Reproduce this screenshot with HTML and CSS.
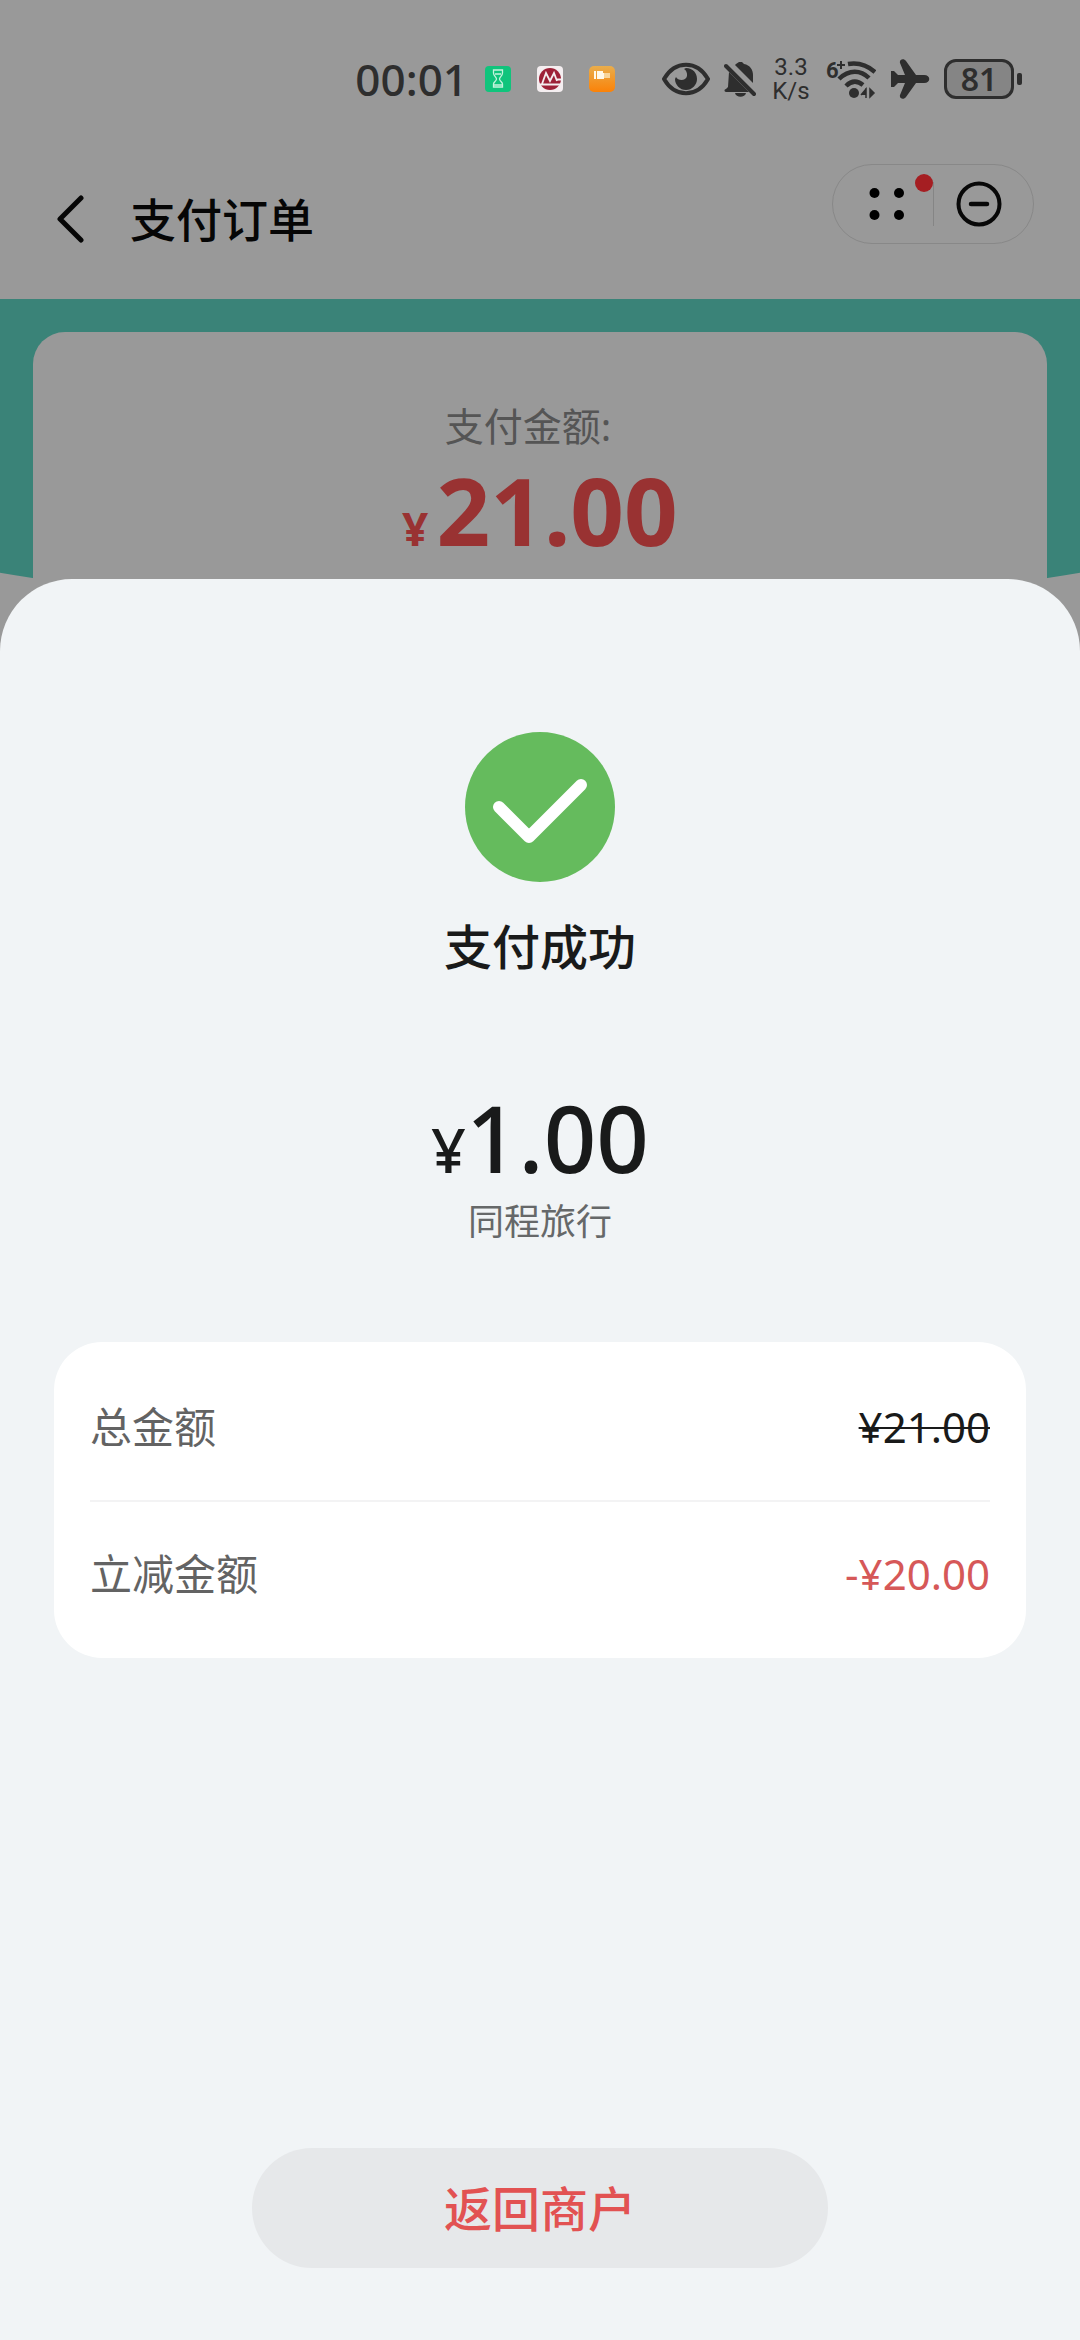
FILE: index.html
```html
<!DOCTYPE html>
<html lang="zh-CN">
<head>
<meta charset="utf-8">
<meta name="viewport" content="width=device-width">
<title>支付订单</title>
<link rel="stylesheet" href="styles.css">
</head>
<body>
<div class="screen">
  <main class="page">
    <div class="status">
      <time class="clock">00:01</time>
      <div class="notices">
        <svg width="28" height="28" viewBox="0 0 28 28"><rect x="1" y="1" width="26" height="26" rx="4" fill="#10c47c"/><path d="M9.500 5h9v3c0 3-3 4-3 6s3 3 3 5v3h-9v-3c0-2 3-3 3-5s-3-3-3-6zM11 9h6M10 20h8" fill="none" stroke="#c5f3dd" stroke-width="1.300"/></svg>
        <svg width="28" height="28" viewBox="0 0 28 28"><rect x="1" y="1" width="26" height="26" rx="4" fill="#f4eef0"/><circle cx="14" cy="14" r="11" fill="#9d2137"/><path d="M6 19l4-11 4 8 4-8 3 8M4 19.500h20M20 14.500h7" fill="none" stroke="#f4eef0" stroke-width="1.800"/></svg>
        <svg width="28" height="28" viewBox="0 0 28 28"><defs><linearGradient id="amber" x1="0" y1="0" x2="0" y2="1"><stop offset="0" stop-color="#e9ad4c"/><stop offset="1" stop-color="#fb8208"/></linearGradient></defs><rect x="1" y="1" width="26" height="26" rx="5" fill="url(#amber)"/><path d="M6 6h2v8H6zM9 6h6v2h1v6H9z" fill="#fff8e8"/><path d="M16 8h6v5h-6z" fill="#f8d59b"/></svg>
      </div>
      <div class="signals">
        <svg width="48" height="34" viewBox="0 0 48 34"><path d="M2 17C13-2 35-2 46 17 35 36 13 36 2 17z" fill="none" stroke="#2e2e2e" stroke-width="4" stroke-linejoin="round"/><path d="M24 6c7 0 11 5 11 11s-5 11-11 11-11-5-11-11l1-2c2 4 10 4 11-1 .5-3-1-6-3-7z" fill="#2e2e2e"/></svg>
        <svg width="32" height="36" viewBox="0 0 32 36"><path d="M2 5l28 28" stroke="#2e2e2e" stroke-width="4" stroke-linecap="round"/><path d="M5 11l20 20H2c-2 0-2-3 0-3l2-2zM12 3l3-2h3l2 2c6 1 9 6 9 11v8L11 4zM11 32h11c-1 5-10 5-11 0z" fill="#2e2e2e"/></svg>
        <div class="speed"><span>3.3</span><span>K/s</span></div>
        <svg width="50" height="42" viewBox="0 0 50 42"><text class="wifi-gen" x="0" y="20">6</text><path d="M11 7h8M15 3v8" stroke="#2e2e2e" stroke-width="2"/><path d="M22 6c11-2 19 1 27 8M13 21c10-10 22-9 30-1M20 28c6-6 12-5 17-1" fill="none" stroke="#2e2e2e" stroke-width="4.500"/><circle cx="28" cy="35" r="5" fill="#2e2e2e"/><path d="M40 30v10M35 37l5-6v6M44 31v8l4-4z" fill="#2e2e2e" stroke="#2e2e2e" stroke-width="1.500"/></svg>
        <svg width="40" height="40" viewBox="0 0 40 40"><path d="M1 12h3l4 4h7L10 4c-1-4 4-5 6-2l10 14h8c7 0 7 8 0 8h-8L16 38c-2 3-7 2-6-2l5-12H8l-4 4H1z" fill="#2e2e2e"/></svg>
        <div class="battery"><span class="battery-body">81</span><span class="battery-tip"></span></div>
      </div>
    </div>
    <header class="bar">
      <button class="back" aria-label="返回"><svg width="28" height="50" viewBox="0 0 28 50"><path d="M25 4L4 25l21 21" fill="none" stroke="#060606" stroke-width="5" stroke-linecap="round" stroke-linejoin="round"/></svg></button>
      <h1 class="title">支付订单</h1>
      <div class="capsule">
        <button class="capsule-part more" aria-label="更多"><svg width="36" height="34" viewBox="0 0 36 34"><circle cx="5.500" cy="6" r="5"/><circle cx="30" cy="6" r="5"/><circle cx="5.500" cy="28" r="5"/><circle cx="30" cy="28" r="5"/></svg><span class="dot"></span></button>
        <button class="capsule-part close" aria-label="关闭"><svg width="46" height="46" viewBox="0 0 46 46"><circle cx="23" cy="23" r="20.500" fill="none" stroke="#080808" stroke-width="4"/><path d="M15 23h16" stroke="#080808" stroke-width="4.500" stroke-linecap="round"/></svg></button>
      </div>
    </header>
    <section class="hero">
      <div class="order">
        <p class="order-label">支付金额:</p>
        <p class="order-sum"><span class="order-yen">¥</span>21.00</p>
      </div>
    </section>
  </main>

  <section class="sheet" role="dialog" aria-labelledby="result">
    <svg width="150" height="150" viewBox="0 0 150 150"><circle cx="75" cy="75" r="75" fill="#65bb5d"/><path d="M34 75l30 30 52-52" fill="none" stroke="#fff" stroke-width="12" stroke-linecap="round" stroke-linejoin="round"/></svg>
    <h2 class="result" id="result">支付成功</h2>
    <p class="paid"><span class="paid-yen">¥</span>1.00</p>
    <p class="merchant">同程旅行</p>
    <dl class="detail">
      <div class="row"><dt>总金额</dt><dd class="was">¥21.00</dd></div>
      <div class="row"><dt>立减金额</dt><dd class="off">-¥20.00</dd></div>
    </dl>
    <button class="return">返回商户</button>
  </section>
</div>
</body>
</html>
```
FILE: styles.css
```css
* { box-sizing: border-box; }

body,
h1,
h2,
p,
dl,
dd {
  margin: 0;
}

body {
  font-family: "Noto Sans", "Noto Sans CJK SC", sans-serif;
  background: #999;
}

button {
  padding: 0;
  border: 0;
  background: none;
  font: inherit;
  display: flex;
  align-items: center;
  justify-content: center;
}

svg { display: block; flex: none; }

.screen {
  display: grid;
  min-height: 100vh;
}

.page,
.sheet {
  grid-area: 1 / 1;
}

/* status bar */
.status {
  display: flex;
  justify-content: flex-end;
  align-items: center;
  height: 158px;
  padding-right: 58px;
  color: #2e2e2e;
}

.clock {
  font-size: 44px;
  font-weight: 500;
  line-height: 60px;
}

.notices {
  display: flex;
  gap: 24px;
  margin: 0 46px 0 16px;
}

.signals {
  display: flex;
  align-items: center;
  gap: 14px;
}

.speed {
  display: flex;
  flex-direction: column;
  align-items: center;
  width: 42px;
  font-family: Roboto, sans-serif;
  font-size: 24px;
  line-height: 24px;
}

.wifi-gen {
  font: 700 22px "Liberation Sans Narrow", Roboto, sans-serif;
  fill: #2e2e2e;
}

.battery {
  display: flex;
  align-items: center;
  gap: 3px;
}

.battery-body {
  width: 70px;
  height: 40px;
  border: 3px solid #2e2e2e;
  border-radius: 12px;
  background: #858585;
  font-size: 32px;
  font-weight: 600;
  line-height: 34px;
  text-align: center;
}

.battery-tip {
  width: 5px;
  height: 12px;
  border-radius: 2px;
  background: #2e2e2e;
}

/* title bar */
.bar {
  display: flex;
  align-items: center;
  height: 141px;
  padding: 0 46px 20px 56px;
}

.title {
  flex: 1;
  margin-left: 46px;
  font-size: 46px;
  font-weight: 500;
  line-height: 60px;
  color: #060606;
}

.capsule {
  display: flex;
  align-items: center;
  align-self: flex-start;
  width: 202px;
  height: 80px;
  margin-top: 6px;
  border: 1px solid #888;
  border-radius: 40px;
}

.capsule-part {
  position: relative;
  flex: 1;
  height: 44px;
}

.more {
  padding-left: 8px;
  border-right: 1px solid #858585;
}

.close {
  padding-right: 8px;
}

.dot {
  position: absolute;
  top: -8px;
  right: 0;
  width: 18px;
  height: 18px;
  border-radius: 50%;
  background: #a51e22;
}

/* order summary behind the sheet */
.hero {
  position: relative;
  padding: 33px;
}

.hero::before {
  content: "";
  position: absolute;
  inset: 0;
  background: #3a8378;
  clip-path: ellipse(100% 316px at 50% 0);
}

.order {
  position: relative;
  height: 320px;
  padding-top: 66px;
  border-radius: 32px;
  background: #999;
  text-align: center;
}

.order-label {
  padding-right: 24px;
  font-size: 39px;
  line-height: 56px;
  color: #555;
}

.order-sum {
  font-size: 94px;
  font-weight: 700;
  line-height: 112px;
  color: #993232;
}

.order-yen {
  margin-right: 8px;
  font-size: 46px;
  line-height: 1;
}

/* payment result sheet */
.sheet {
  position: relative;
  display: flex;
  flex-direction: column;
  align-items: center;
  margin-top: 579px;
  padding: 153px 54px 72px;
  border-radius: 72px 72px 0 0;
  background: #f1f4f6;
  color: #191a1a;
}

.result {
  margin-top: 30px;
  font-size: 48px;
  font-weight: 500;
  line-height: 70px;
}

.paid {
  margin-top: 100px;
  font-size: 92px;
  font-weight: 500;
  line-height: 112px;
}

.paid-yen {
  font-size: 61px;
  line-height: 1;
}

.merchant {
  font-size: 36px;
  line-height: 56px;
  color: #666869;
}

.detail {
  align-self: stretch;
  margin-top: 92px;
  padding: 12px 36px;
  border-radius: 48px;
  background: #fff;
}

.row {
  display: flex;
  justify-content: space-between;
  align-items: center;
  height: 146px;
  font-size: 42px;
  line-height: 60px;
  color: #636363;
}

.row + .row {
  border-top: 2px solid #f3f3f4;
}

.was {
  color: #191a1a;
  text-decoration: line-through;
  text-decoration-thickness: 2px;
}

.off {
  color: #d65858;
}

.return {
  width: 576px;
  height: 120px;
  margin-top: auto;
  padding-bottom: 4px;
  border-radius: 60px;
  background: #e6e8ea;
  font-size: 48px;
  font-weight: 500;
  color: #e25252;
}
```
